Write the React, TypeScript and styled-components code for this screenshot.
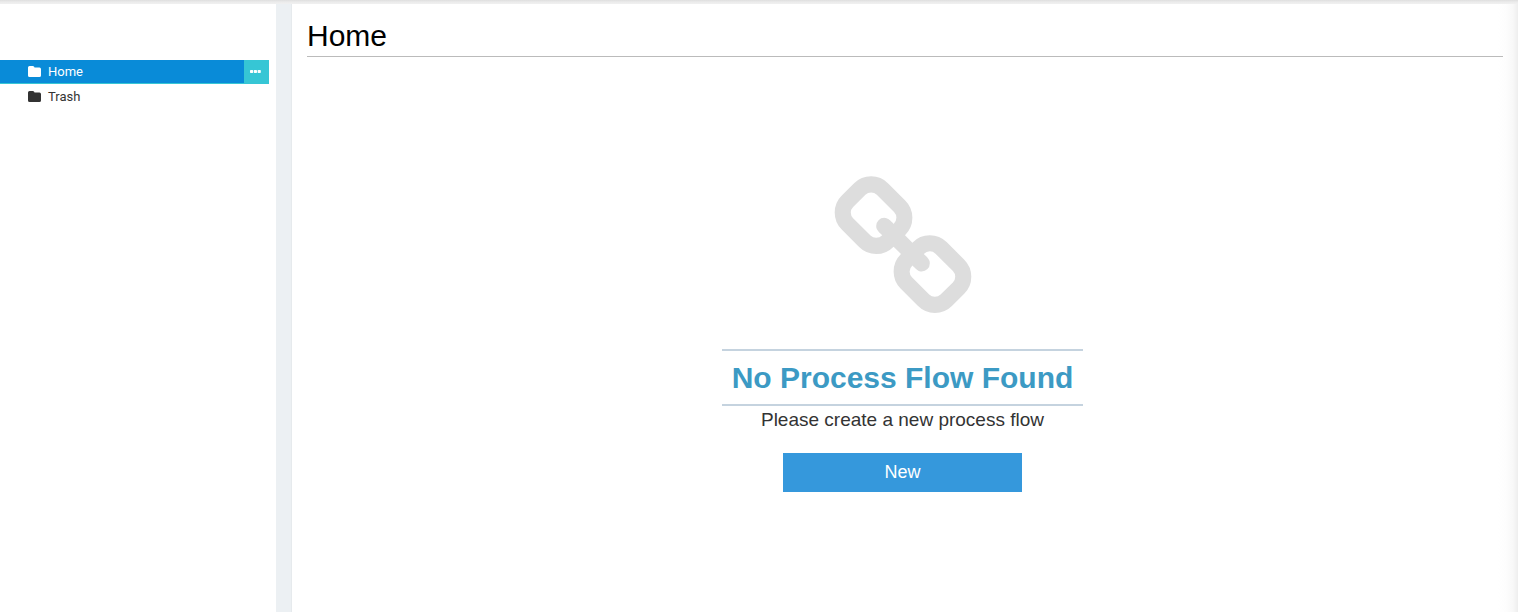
import React from "react";
import styled, { createGlobalStyle } from "styled-components";

const GlobalStyle = createGlobalStyle`
  *, *::before, *::after { box-sizing: border-box; }
  body {
    margin: 0;
    background: #fff;
    color: #333;
    font-family: "Liberation Sans", Arial, sans-serif;
  }
`;

const Page = styled.div`
  min-height: 100vh;
  display: flex;
  flex-direction: column;
`;

const TopEdge = styled.div`
  height: 4px;
  background: linear-gradient(to bottom, #dedede, #ebebeb 50%, #f0f0f0);
`;

const Body = styled.div`
  flex: 1;
  display: flex;
`;

const Sidebar = styled.nav`
  width: 276px;
  flex-shrink: 0;
  padding: 56px 7px 0 0;
`;

const FolderList = styled.ul`
  margin: 0;
  padding: 0;
  list-style: none;
  display: flex;
  flex-direction: column;
  gap: 1px;
`;

const FolderRow = styled.li<{ $active?: boolean }>`
  display: flex;
  height: 24px;
  color: ${(p) => (p.$active ? "#fff" : "#333")};
  background: ${(p) => (p.$active ? "#098bd8" : "transparent")};
  border-bottom: 1px solid ${(p) => (p.$active ? "#36c6d5" : "transparent")};
`;

const FolderLink = styled.a`
  flex: 1;
  display: flex;
  align-items: center;
  gap: 7px;
  padding-left: 28px;
  color: inherit;
  font-family: Roboto, sans-serif;
  font-size: 13px;
  line-height: 20px;
  text-decoration: none;
`;

const MoreButton = styled.button`
  width: 25px;
  padding: 0 2px 0 0;
  border: 0;
  display: flex;
  align-items: center;
  justify-content: center;
  background: #36c6d5;
  color: #fff;
  cursor: pointer;
`;

const Divider = styled.div`
  width: 16px;
  flex-shrink: 0;
  background: #ecf0f3;
  border-right: 1px solid #e6eaed;
`;

const Main = styled.main`
  flex: 1;
  padding-right: 5px;
  background: linear-gradient(to left, #eeeeee, #f8f8f8 5px, #fdfdfd 12px, #fff 20px);
`;

const Title = styled.h1`
  margin: 14px 10px 0 15px;
  padding-bottom: 2px;
  border-bottom: 1px solid #bbb;
  color: #000;
  font-size: 30px;
  font-weight: 400;
  line-height: 36px;
`;

const EmptyState = styled.section`
  padding-top: 112px;
  display: flex;
  flex-direction: column;
  align-items: center;
`;

const EmptyTitle = styled.h2`
  margin: 24px 0 0;
  padding: 8px 10px;
  border: solid #c5d3df;
  border-width: 2px 0;
  color: #3c9ac4;
  font-size: 30px;
  font-weight: 700;
  line-height: 37px;
`;

const EmptyText = styled.p`
  margin: 0;
  font-size: 19px;
  line-height: 27px;
`;

const NewButton = styled.button`
  width: 239px;
  height: 39px;
  margin-top: 20px;
  padding: 0;
  border: 0;
  background: #3598dc;
  color: #fff;
  font-family: inherit;
  font-size: 18px;
  cursor: pointer;
`;

const ChainDrawing = styled.svg`
  margin-top: 6px;
`;

const FolderIcon = () => (
  <svg width="13" height="11" viewBox="0 0 13 11" fill="currentColor" aria-hidden="true">
    <path d="M1.5 0H4.8Q6.4 0 6.5 1.6H11.5Q13 1.7 13 3.2V9.4Q13 11 11.4 11H1.6Q0 11 0 9.4V1.6Q0 0 1.5 0Z" />
  </svg>
);

const DotsIcon = () => (
  <svg width="11" height="3" viewBox="0 0 11 3" fill="currentColor" aria-hidden="true">
    <rect width="3.2" height="3" rx="0.7" />
    <rect x="3.8" width="3.2" height="3" rx="0.7" />
    <rect x="7.6" width="3.2" height="3" rx="0.7" />
  </svg>
);

const ChainIcon = () => (
  <ChainDrawing width="150" height="150" viewBox="0 0 1792 1792" fill="#ddd" aria-hidden="true">
    <path d="M1520 1216q0-40-28-68l-208-208q-28-28-68-28-42 0-72 32 3 3 19 18.500t21.500 21.500 15 19 13 25.500 3.500 27.500q0 40-28 68t-68 28q-15 0-27.500-3.500t-25.500-13-19-15-21.500-21.500-18.500-19q-33 31-33 73 0 40 28 68l206 207q27 27 68 27 40 0 68-26l147-146q28-28 28-67zm-703-705q0-40-28-68l-206-207q-28-28-68-28-39 0-68 27l-147 146q-28 28-28 67 0 40 28 68l208 208q27 27 68 27 42 0 72-31-3-3-19-18.500t-21.500-21.500-15-19-13-25.500-3.500-27.500q0-40 28-68t68-28q15 0 27.500 3.500t25.500 13 19 15 21.500 21.500 18.500 19q33-31 33-73zm895 705q0 120-85 203l-147 146q-83 83-203 83-121 0-204-85l-206-207q-83-83-83-203 0-123 88-209l-88-88q-86 88-208 88-120 0-204-84l-208-208q-84-84-84-204t85-203l147-146q83-83 203-83 121 0 204 85l206 207q83 83 83 203 0 123-88 209l88 88q86-88 208-88 120 0 204 84l208 208q84 84 84 204z" />
  </ChainDrawing>
);

export default function App() {
  return (
    <>
      <GlobalStyle />
      <Page>
        <TopEdge />
        <Body>
          <Sidebar aria-label="Folders">
            <FolderList>
              <FolderRow $active>
                <FolderLink href="#home" aria-current="page">
                  <FolderIcon />
                  Home
                </FolderLink>
                <MoreButton type="button" aria-label="Folder actions">
                  <DotsIcon />
                </MoreButton>
              </FolderRow>
              <FolderRow>
                <FolderLink href="#trash">
                  <FolderIcon />
                  Trash
                </FolderLink>
              </FolderRow>
            </FolderList>
          </Sidebar>
          <Divider />
          <Main>
            <Title>Home</Title>
            <EmptyState>
              <ChainIcon />
              <EmptyTitle>No Process Flow Found</EmptyTitle>
              <EmptyText>Please create a new process flow</EmptyText>
              <NewButton type="button">New</NewButton>
            </EmptyState>
          </Main>
        </Body>
      </Page>
    </>
  );
}
